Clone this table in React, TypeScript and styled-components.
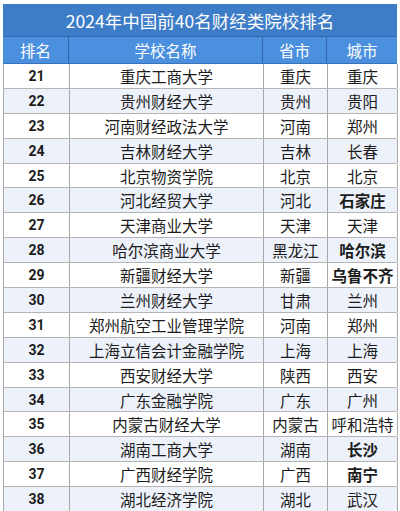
import React from "react";
import styled, { createGlobalStyle } from "styled-components";

interface School {
  rank: number;
  name: string;
  province: string;
  city: string;
  boldCity?: boolean;
}

const schools: School[] = [
  { rank: 21, name: "重庆工商大学", province: "重庆", city: "重庆" },
  { rank: 22, name: "贵州财经大学", province: "贵州", city: "贵阳" },
  { rank: 23, name: "河南财经政法大学", province: "河南", city: "郑州" },
  { rank: 24, name: "吉林财经大学", province: "吉林", city: "长春" },
  { rank: 25, name: "北京物资学院", province: "北京", city: "北京" },
  { rank: 26, name: "河北经贸大学", province: "河北", city: "石家庄", boldCity: true },
  { rank: 27, name: "天津商业大学", province: "天津", city: "天津" },
  { rank: 28, name: "哈尔滨商业大学", province: "黑龙江", city: "哈尔滨", boldCity: true },
  { rank: 29, name: "新疆财经大学", province: "新疆", city: "乌鲁不齐", boldCity: true },
  { rank: 30, name: "兰州财经大学", province: "甘肃", city: "兰州" },
  { rank: 31, name: "郑州航空工业管理学院", province: "河南", city: "郑州" },
  { rank: 32, name: "上海立信会计金融学院", province: "上海", city: "上海" },
  { rank: 33, name: "西安财经大学", province: "陕西", city: "西安" },
  { rank: 34, name: "广东金融学院", province: "广东", city: "广州" },
  { rank: 35, name: "内蒙古财经大学", province: "内蒙古", city: "呼和浩特" },
  { rank: 36, name: "湖南工商大学", province: "湖南", city: "长沙", boldCity: true },
  { rank: 37, name: "广西财经学院", province: "广西", city: "南宁", boldCity: true },
  { rank: 38, name: "湖北经济学院", province: "湖北", city: "武汉" },
];

const GlobalStyle = createGlobalStyle`
  html, body {
    margin: 0;
    padding: 0;
    background: #ffffff;
    overflow: hidden;
  }
  body {
    font-family: "Noto Sans CJK SC", "Noto Sans", sans-serif;
  }
`;

export default function App() {
  return (
    <>
      <GlobalStyle />
      <Page>
        <Table>
          <Title>2024年中国前40名财经类院校排名</Title>
          <HeaderRow>
            <HeadCell>排名</HeadCell>
            <HeadCell>学校名称</HeadCell>
            <HeadCell>省市</HeadCell>
            <HeadCell $last>城市</HeadCell>
          </HeaderRow>
          {schools.map((s) => (
            <Row key={s.rank} $shaded={s.rank % 2 === 0}>
              <RankCell>{s.rank}</RankCell>
              <Cell>{s.name}</Cell>
              <Cell>{s.province}</Cell>
              <Cell $bold={s.boldCity}>{s.city}</Cell>
            </Row>
          ))}
        </Table>
      </Page>
    </>
  );
}

const Page = styled.div`
  width: 400px;
  height: 511px;
  padding: 4px 3px 0 3px;
  box-sizing: border-box;
`;

const Table = styled.div`
  width: 394px;
  display: flex;
  flex-direction: column;
`;

const Title = styled.div`
  height: 33px;
  background: #3d7cc6;
  color: #ffffff;
  font-size: 17.5px;
  display: flex;
  align-items: center;
  justify-content: center;
  border-bottom: 1px solid #2f69ad;
  box-sizing: border-box;
`;

const cols = "66px 194px 64px 70px";

const HeaderRow = styled.div`
  display: grid;
  grid-template-columns: ${cols};
  height: 27px;
  background: #4b90df;
  border-bottom: 1px solid #3a72b8;
  box-sizing: border-box;
`;

const HeadCell = styled.div<{ $last?: boolean }>`
  display: flex;
  align-items: center;
  justify-content: center;
  color: #ffffff;
  font-size: 15.5px;
  border-right: ${(p) => (p.$last ? "none" : "1px solid #2f64a8")};
`;

const Row = styled.div<{ $shaded: boolean }>`
  display: grid;
  grid-template-columns: ${cols};
  height: 24.9px;
  background: ${(p) => (p.$shaded ? "#edf1fa" : "#ffffff")};
  border-left: 1px solid #a8a8a8;
  border-bottom: 1px solid #b4b4b4;
  box-sizing: border-box;
`;

const Cell = styled.div<{ $bold?: boolean }>`
  display: flex;
  align-items: center;
  justify-content: center;
  color: #1c1c1c;
  font-size: 15.5px;
  font-weight: ${(p) => (p.$bold ? 600 : 400)};
  border-right: 1px solid #a8a8a8;
  white-space: nowrap;
`;

const RankCell = styled(Cell)`
  font-family: Roboto, "Liberation Sans", sans-serif;
  font-size: 14px;
  font-weight: 700;
`;
